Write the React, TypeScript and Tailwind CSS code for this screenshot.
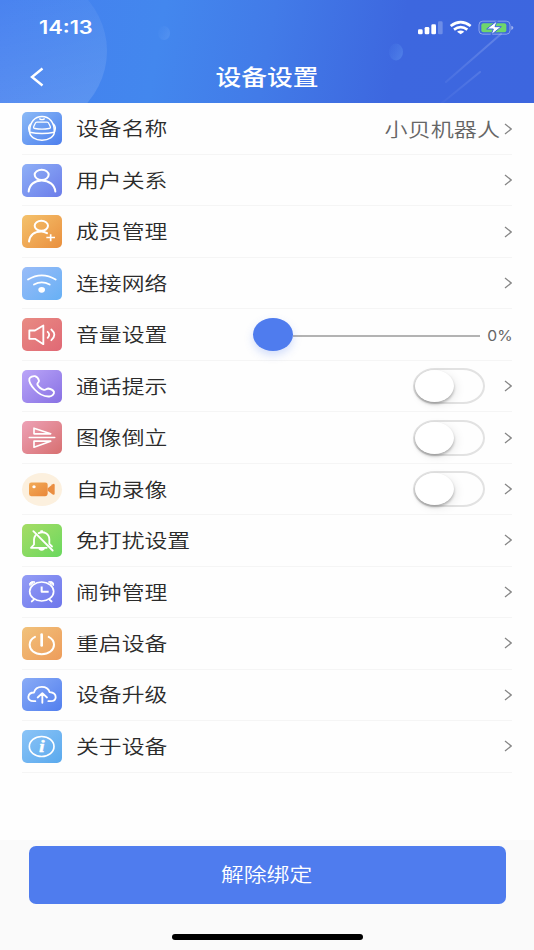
import type { ReactNode } from "react";

type Row = {
    label: string;
    tile: string;
    icon: ReactNode;
    value?: string;
    toggle?: boolean;
    slider?: boolean;
};

const rows: Row[] = [
    {
        label: "设备名称",
        tile: "rounded-[5px] bg-gradient-to-br from-[#8cbaf6] to-[#4d7eed]",
        value: "小贝机器人",
        icon: (
            <g strokeWidth="4.5">
                <path d="M23 58C23 30 38 13 60 13S97 30 97 58C97 74 80 84 60 84S23 74 23 58Z" />
                <path d="M23 60Q60 68 97 60" />
                <path d="M45 30H75Q79 30 81 35L85 44Q86 49 81 49Q60 53 39 49Q34 49 35 44L39 35Q41 30 45 30Z" strokeWidth="4" />
                <path d="M53 20Q60 25 67 20" strokeWidth="4" />
                <path d="M25 36Q17 44 22 58M95 36Q103 44 98 58" />
            </g>
        ),
    },
    {
        label: "用户关系",
        tile: "rounded-[5px] bg-gradient-to-br from-[#8fb0f7] to-[#6c7ce9]",
        icon: (
            <g strokeWidth="6">
                <ellipse cx="59" cy="32" rx="21" ry="15.5" />
                <path d="M20 82C22 61 38 49 59 49S98 61 100 82" />
            </g>
        ),
    },
    {
        label: "成员管理",
        tile: "rounded-[5px] bg-gradient-to-br from-[#f4c26c] to-[#e98f3d]",
        icon: (
            <g strokeWidth="6">
                <ellipse cx="58" cy="32" rx="20" ry="15" />
                <path d="M21 79C24 59 38 49 58 49Q67 49 75 54" />
                <path d="M86 57V78M73 67H99" strokeWidth="5" strokeLinecap="butt" />
            </g>
        ),
    },
    {
        label: "连接网络",
        tile: "rounded-[5px] bg-gradient-to-br from-[#99bcf8] to-[#66b0f5]",
        icon: (
            <g strokeWidth="5.5">
                <path d="M18 37Q59 12 101 37M36 52Q59 39 83 52" />
                <ellipse cx="59" cy="68" rx="10" ry="8.5" fill="white" stroke="none" />
            </g>
        ),
    },
    {
        label: "音量设置",
        tile: "rounded-[5px] bg-gradient-to-br from-[#e88b83] to-[#e06875]",
        slider: true,
        icon: (
            <g strokeWidth="5.5">
                <path d="M22 37H39L64 22V78L39 62H22Z" />
                <path d="M77 41Q86 49 77 59M88 34Q106 50 88 66" />
            </g>
        ),
    },
    {
        label: "通话提示",
        tile: "rounded-[5px] bg-gradient-to-br from-[#bba5f8] to-[#8870e3]",
        toggle: true,
        icon: (
            <path
                d="M22 26C24 20 33 17 39 18C45 20 50 27 51 32C51 37 45 38 46 43C50 51 58 57 66 59C72 60 73 55 79 55C86 56 93 60 96 65C97 71 91 78 82 79C68 80 50 71 38 58C28 47 20 35 22 26Z"
                strokeWidth="5.5"
            />
        ),
    },
    {
        label: "图像倒立",
        tile: "rounded-[5px] bg-gradient-to-br from-[#eda1b6] to-[#d76f70]",
        toggle: true,
        icon: (
            <g strokeWidth="5">
                <path d="M22 49H98" />
                <path d="M36 21V38H86ZM36 60H86L36 78Z" />
            </g>
        ),
    },
    {
        label: "自动录像",
        tile: "rounded-[50%] bg-[#fcf0de]",
        toggle: true,
        icon: (
            <g stroke="none">
                <defs>
                    <linearGradient id="cam" x1="0" y1="0" x2="1" y2="1">
                        <stop offset="0" stopColor="#f2ab57" />
                        <stop offset="1" stopColor="#e9873a" />
                    </linearGradient>
                </defs>
                <rect x="21" y="28" width="56" height="41" rx="7" fill="url(#cam)" />
                <path d="M77 45L92 33Q98 30 98 36V61Q98 67 92 64L77 53Z" fill="#ea8d40" />
                <ellipse cx="36" cy="41" rx="5" ry="4.5" fill="white" />
            </g>
        ),
    },
    {
        label: "免打扰设置",
        tile: "rounded-[5px] bg-gradient-to-br from-[#a5dc65] to-[#68d85f]",
        icon: (
            <g strokeWidth="5.5">
                <path d="M74 71H27L36 61V46Q37 38 41 33M50 27C66 19 82 30 82 46V59L90 67" />
                <path d="M34 21L92 79" />
                <path d="M52 74Q59 80 66 74ZM57 21H61" strokeWidth="5" />
            </g>
        ),
    },
    {
        label: "闹钟管理",
        tile: "rounded-[5px] bg-gradient-to-br from-[#949df5] to-[#6d75eb]",
        icon: (
            <g strokeWidth="5">
                <ellipse cx="59" cy="49" rx="36" ry="28.5" />
                <path d="M59 34V50H80" strokeLinecap="butt" strokeWidth="6" />
                <path d="M36 73L29 79M82 73L89 79" />
                <path d="M23 30Q21 22 28 20Q34 18 38 20ZM95 30Q97 22 90 20Q84 18 80 20Z" fill="white" strokeWidth="3" />
            </g>
        ),
    },
    {
        label: "重启设备",
        tile: "rounded-[5px] bg-gradient-to-br from-[#f1c27b] to-[#ed9c5b]",
        icon: (
            <g strokeWidth="6">
                <path d="M59 22V55" strokeWidth="8" />
                <path d="M39 29C29 34 23 43 23 53C23 69 38 81 59 81S96 69 96 53C96 43 90 34 80 29" />
            </g>
        ),
    },
    {
        label: "设备升级",
        tile: "rounded-[5px] bg-gradient-to-br from-[#8aabf6] to-[#527fee]",
        icon: (
            <g strokeWidth="5.5">
                <path d="M40 69H34C24 69 18 63 19 56C20 48 27 43 36 43C39 32 48 26 59 26C71 26 80 32 83 42C93 43 101 48 101 57C101 65 94 69 85 69H79" />
                <path d="M61 74V46M47 58L61 45L75 58" />
            </g>
        ),
    },
    {
        label: "关于设备",
        tile: "rounded-[5px] bg-gradient-to-br from-[#8bc4f7] to-[#59a9ed]",
        icon: (
            <g strokeWidth="5">
                <ellipse cx="59" cy="49" rx="37" ry="30" />
                <text
                    x="51"
                    y="65"
                    fontSize="48"
                    fontFamily="Liberation Serif, serif"
                    fontStyle="italic"
                    fontWeight="700"
                    fill="white"
                    stroke="white"
                    strokeWidth="1"
                    textLength="17"
                    lengthAdjust="spacingAndGlyphs"
                >
                    i
                </text>
            </g>
        ),
    },
];

const Chevron = () => (
    <svg className="h-[12px] w-[8px] shrink-0" viewBox="0 0 8 12" fill="none" stroke="#858585" strokeWidth="1.3">
        <path d="M1 1L7.2 6L1 11" />
    </svg>
);

const Toggle = () => (
    <div className="mr-[19px] flex h-9 w-[72px] items-center rounded-[22px/18px] border-2 border-[#e2e2e2] bg-[#fefefe]">
        <div className="h-8 w-[39px] shrink-0 rounded-[50%] bg-white shadow-[0_2px_3px_rgba(0,0,0,0.28),3px_3px_10px_rgba(0,0,0,0.08)]" />
    </div>
);

const Slider = () => (
    <div className="flex items-center">
        <div className="z-10 h-[33px] w-10 rounded-[50%] bg-[#4f7cee] shadow-[0_4px_8px_rgba(79,124,238,0.25)]" />
        <div className="mt-0.5 h-[2px] w-[187px] bg-[#b3b3b3]" />
        <div className="w-8 pb-0.5 text-right">
            <span className="inline-block origin-right translate-x-px scale-x-[1.12] font-[Inter,sans-serif] text-[14px] text-[#666]">0%</span>
        </div>
    </div>
);

const StatusIcons = () => (
    <svg className="h-[15px] w-[96px]" viewBox="453 58 288 45" fill="white">
        <rect x="453" y="86" width="14" height="15" rx="4" />
        <rect x="473" y="79" width="14" height="22" rx="4" />
        <rect x="493" y="71" width="14" height="30" rx="4" />
        <rect x="513" y="62" width="14" height="39" rx="4" opacity="0.25" />
        <g fill="none" stroke="white" strokeWidth="8">
            <path d="M551 76Q581 53 611 76" />
            <path d="M561 87Q581 72 601 87" />
        </g>
        <path d="M570 93Q581 86 592 93L581 101Z" />
        <rect x="636" y="61.5" width="93" height="39" rx="11" fill="none" stroke="white" strokeWidth="3" opacity="0.4" />
        <path d="M733 75Q739 77 739 81T733 88Z" opacity="0.5" />
        <rect x="643" y="68" width="75" height="27" rx="6" fill="#6fd66c" />
        <path d="M691 60L659 85H679L672 103L703 78H684Z" stroke="#3f67dc" strokeWidth="3" />
    </svg>
);

const HeaderArt = () => (
    <svg className="absolute inset-0 h-full w-full" viewBox="0 0 534 103" preserveAspectRatio="none">
        <defs>
            <linearGradient id="disc" x1="0.5" y1="0" x2="0.8" y2="1">
                <stop offset="0.2" stopColor="#fff" stopOpacity="0.03" />
                <stop offset="0.8" stopColor="#fff" stopOpacity="0.12" />
            </linearGradient>
            <linearGradient id="dot" x1="0" y1="0.2" x2="1" y2="0.8">
                <stop offset="0" stopColor="#5b96f2" stopOpacity="0.05" />
                <stop offset="1" stopColor="#6ba3f5" stopOpacity="0.4" />
            </linearGradient>
            <linearGradient id="streak" gradientUnits="userSpaceOnUse" x1="446" y1="104" x2="498" y2="50">
                <stop offset="0" stopColor="#a9bdf5" stopOpacity="0.05" />
                <stop offset="1" stopColor="#a9bdf5" stopOpacity="0.3" />
            </linearGradient>
        </defs>
        <ellipse cx="-5" cy="51" rx="112" ry="92" fill="url(#disc)" />
        <ellipse cx="164" cy="33" rx="6" ry="7" fill="url(#dot)" />
        <ellipse cx="396" cy="52" rx="7" ry="8.5" fill="url(#dot)" />
        <path d="M446 82L501 34M442 103L480 72" stroke="url(#streak)" strokeWidth="2" strokeLinecap="round" />
    </svg>
);

export default function App() {
    return (
        <div className="flex h-[950px] w-[534px] flex-col overflow-hidden bg-[#fefefe] font-['Noto_Sans_CJK_SC',sans-serif]">
            <header className="relative h-[103px] shrink-0 bg-[linear-gradient(100deg,#447fef_0%,#4387ee_30%,#427be8_50%,#3d67df_74%,#3d66df_100%)] text-white">
                <HeaderArt />
                <div className="relative flex h-[54px] items-center justify-between pr-5 pl-[39px]">
                    <span className="origin-left scale-x-[1.21] font-[Inter,sans-serif] text-[18px] font-semibold">14:13</span>
                    <StatusIcons />
                </div>
                <div className="relative flex h-[46px] items-center">
                    <svg className="ml-[30px] h-[20px] w-[14px]" viewBox="0 0 14 20" fill="none" stroke="white" strokeWidth="2.4">
                        <path d="M12.5 1.5L2 10L12.5 18.5" />
                    </svg>
                    <h1 className="mr-[44px] flex-1 scale-x-[1.215] pb-[3px] text-center text-[21.2px] leading-none font-medium">设备设置</h1>
                </div>
            </header>

            <main className="mt-[0.5px] flex h-[669px] shrink-0 flex-col px-[22px]">
                {rows.map((row) => (
                    <div key={row.label} className="flex flex-1 items-center border-b border-[#f5f5f5]">
                        <div className={`h-[33px] w-10 shrink-0 ${row.tile}`}>
                            <svg
                                className="h-full w-full"
                                viewBox="0 0 120 98"
                                fill="none"
                                stroke="white"
                                strokeLinecap="round"
                                strokeLinejoin="round"
                            >
                                {row.icon}
                            </svg>
                        </div>
                        <span className="ml-[14px] origin-left scale-x-[1.215] text-[18.8px] leading-none font-[350] text-[#2b2b2b]">
                            {row.label}
                        </span>
                        <div className="ml-auto flex items-center">
                            {row.value && (
                                <span className="mr-1 origin-right scale-x-[1.215] pb-px text-[19px] leading-none font-[350] text-[#666]">
                                    {row.value}
                                </span>
                            )}
                            {row.toggle && <Toggle />}
                            {row.slider ? <Slider /> : <Chevron />}
                        </div>
                    </div>
                ))}
            </main>

            <footer className="mt-auto flex h-[110px] flex-col items-center bg-[#fafafa] pt-[6px]">
                <button className="h-[58px] w-[477px] rounded-[7px] bg-[#4f7cee] text-white">
                    <span className="inline-block scale-x-[1.215] text-[18.8px] leading-none font-[350]">解除绑定</span>
                </button>
                <div className="mt-[30px] h-[6px] w-[191px] rounded-full bg-black" />
            </footer>
        </div>
    );
}
